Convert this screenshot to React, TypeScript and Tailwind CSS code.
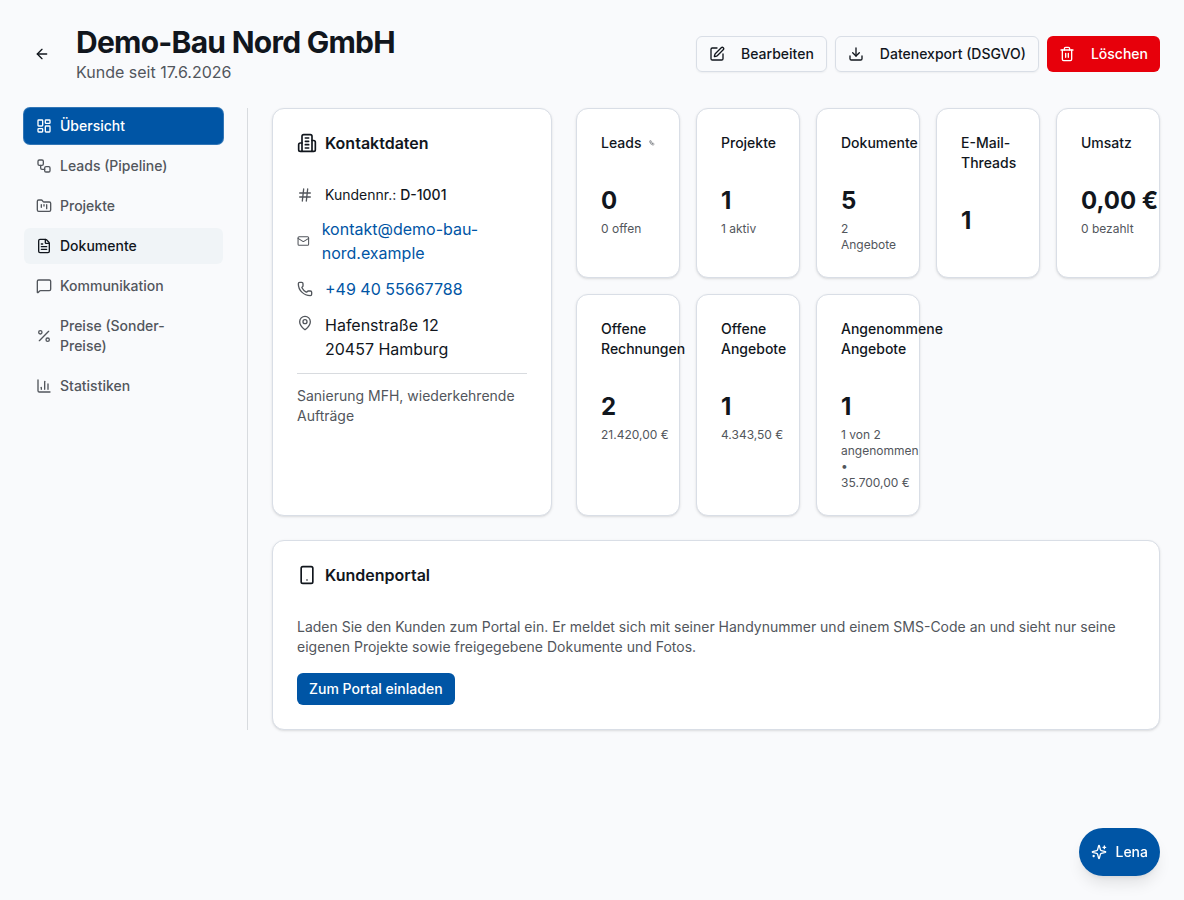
import {
    ArrowLeft,
    ChartColumn,
    Download,
    Euro,
    FileCheck,
    FileText,
    FolderKanban,
    Hash,
    LayoutDashboard,
    Mail,
    MapPin,
    MessageSquare,
    Percent,
    Phone,
    Receipt,
    Smartphone,
    SquarePen,
    Workflow,
    type LucideIcon,
} from "lucide-react";
import type { ReactNode } from "react";

type NavItem = { label: string; icon: LucideIcon; state?: "active" | "hover" };

const NAV_ITEMS: NavItem[] = [
    { label: "Übersicht", icon: LayoutDashboard, state: "active" },
    { label: "Leads (Pipeline)", icon: Workflow },
    { label: "Projekte", icon: FolderKanban },
    { label: "Dokumente", icon: FileText, state: "hover" },
    { label: "Kommunikation", icon: MessageSquare },
    { label: "Preise (Sonder-Preise)", icon: Percent },
    { label: "Statistiken", icon: ChartColumn },
];

type Stat = { title: string; value: string; hint?: string; icon: LucideIcon };

// Amounts keep a non-breaking space before the currency sign
const STATS: Stat[] = [
    { title: "Leads", value: "0", hint: "0 offen", icon: Workflow },
    { title: "Projekte", value: "1", hint: "1 aktiv", icon: FolderKanban },
    { title: "Dokumente", value: "5", hint: "2 Angebote", icon: FileText },
    { title: "E-Mail-Threads", value: "1", icon: Mail },
    { title: "Umsatz", value: "0,00\u00a0€", hint: "0 bezahlt", icon: Euro },
    {
        title: "Offene Rechnungen",
        value: "2",
        hint: "21.420,00\u00a0€",
        icon: Receipt,
    },
    {
        title: "Offene Angebote",
        value: "1",
        hint: "4.343,50\u00a0€",
        icon: FileText,
    },
    {
        title: "Angenommene Angebote",
        value: "1",
        hint: "1 von 2 angenommen • 35.700,00\u00a0€",
        icon: FileCheck,
    },
];

const svgProps = {
    viewBox: "0 0 24 24",
    fill: "none",
    stroke: "currentColor",
    strokeWidth: 2,
    strokeLinecap: "round",
    strokeLinejoin: "round",
} as const;

const BuildingIcon = () => (
    <svg {...svgProps} className="size-5">
        <path d="M6 22V4a2 2 0 0 1 2-2h8a2 2 0 0 1 2 2v18Z" />
        <path d="M6 12H4a2 2 0 0 0-2 2v6a2 2 0 0 0 2 2h2" />
        <path d="M18 9h2a2 2 0 0 1 2 2v9a2 2 0 0 1-2 2h-2" />
        <path d="M10 6h4M10 10h4M10 14h4M10 18h4" />
    </svg>
);

const TrashIcon = () => (
    <svg {...svgProps} className="size-4">
        <path d="M3 6h18" />
        <path d="M19 6v14c0 1-1 2-2 2H7c-1 0-2-1-2-2V6" />
        <path d="M8 6V4c0-1 1-2 2-2h4c1 0 2 1 2 2v2" />
        <path d="M10 11v6M14 11v6" />
    </svg>
);

const SparklesIcon = () => (
    <svg {...svgProps} className="size-4">
        <path d="M9.937 15.5A2 2 0 0 0 8.5 14.063l-6.135-1.582a.5.5 0 0 1 0-.962L8.5 9.936A2 2 0 0 0 9.937 8.5l1.582-6.135a.5.5 0 0 1 .963 0L14.063 8.5A2 2 0 0 0 15.5 9.937l6.135 1.581a.5.5 0 0 1 0 .964L15.5 14.063a2 2 0 0 0-1.437 1.437l-1.582 6.135a.5.5 0 0 1-.963 0z" />
        <path d="M20 3v4M22 5h-4M4 17v2M5 18H3" />
    </svg>
);

const Card = ({
    className = "",
    children,
}: {
    className?: string;
    children: ReactNode;
}) => (
    <div
        className={`rounded-xl border border-[#d9dee6] bg-white p-6 shadow-sm ${className}`}
    >
        {children}
    </div>
);

const CardTitle = ({ icon, text }: { icon: ReactNode; text: string }) => (
    <h2 className="mb-8 flex items-center gap-2 text-base leading-5 font-semibold">
        {icon}
        {text}
    </h2>
);

const StatCard = ({ title, value, hint, icon: Icon }: Stat) => (
    <Card>
        <div className="mb-8 flex items-center justify-between gap-2">
            <h3 className="text-sm font-medium">{title}</h3>
            <Icon className="h-4 w-4 text-[#52565c]" />
        </div>
        <div className="text-2xl font-bold">{value}</div>
        {hint && <p className="mt-1 text-xs text-[#52565c]">{hint}</p>}
    </Card>
);

const Sidebar = () => (
    <aside className="w-56 shrink-0 border-r border-[#d8dbdf] pr-6">
        <nav className="flex flex-col gap-1">
            {NAV_ITEMS.map(({ label, icon: Icon, state }) => {
                const tone =
                    state === "active"
                        ? "bg-[#0055a5] text-white ring-1 ring-[#0055a5]/80"
                        : state === "hover"
                          ? "bg-[#f0f4f7] text-[#11161d]"
                          : "text-[#52565c]";
                return (
                    <button
                        key={label}
                        type="button"
                        className={`flex w-full items-center gap-2 rounded-md px-3 py-2 text-left text-sm font-medium ${tone}`}
                    >
                        <Icon className="size-4 shrink-0" />
                        <span className="flex-1 pr-4">{label}</span>
                    </button>
                );
            })}
        </nav>
    </aside>
);

const outlineButton =
    "flex h-9 items-center gap-4 rounded-md border border-[#d9dee6] px-3 shadow-xs";

const App = () => (
    <div className="min-h-screen bg-[#f9fafc] p-6 font-[Inter,sans-serif] text-[#11161d]">
        <header className="mb-6 flex items-center justify-between">
            <div className="flex items-center gap-4">
                <button
                    type="button"
                    aria-label="Zurück"
                    className="flex size-9 items-center justify-center"
                >
                    <ArrowLeft className="size-4" />
                </button>
                <div>
                    <h1 className="text-3xl font-bold tracking-tight">
                        Demo-Bau Nord GmbH
                    </h1>
                    <p className="text-[#52565c]">Kunde seit 17.6.2026</p>
                </div>
            </div>
            <div className="flex gap-2 text-sm font-medium">
                <button type="button" className={outlineButton}>
                    <SquarePen className="size-4" />
                    Bearbeiten
                </button>
                <button type="button" className={outlineButton}>
                    <Download className="size-4" />
                    Datenexport (DSGVO)
                </button>
                <button
                    type="button"
                    className="flex h-9 items-center gap-4 rounded-md bg-[#e7000b] px-3 text-white"
                >
                    <TrashIcon />
                    Löschen
                </button>
            </div>
        </header>

        <div className="flex gap-6">
            <Sidebar />
            <main className="min-w-0 flex-1 space-y-6">
                <div className="grid grid-cols-3 gap-6">
                    <Card>
                        <CardTitle icon={<BuildingIcon />} text="Kontaktdaten" />
                        <div className="space-y-3">
                            <div className="flex items-center gap-3 text-sm">
                                <Hash className="h-4 w-4 text-[#52565c]" />
                                <span>
                                    Kundennr.:{" "}
                                    <span className="font-medium">D-1001</span>
                                </span>
                            </div>
                            <div className="flex items-center gap-3">
                                <Mail className="h-4 w-4 text-[#52565c]" />
                                <a className="text-[#0055a5]">
                                    kontakt@demo-bau-nord.example
                                </a>
                            </div>
                            <div className="flex items-center gap-3">
                                <Phone className="h-4 w-4 text-[#52565c]" />
                                <a className="text-[#0055a5]">
                                    +49 40 55667788
                                </a>
                            </div>
                            <div className="flex items-start gap-3">
                                <MapPin className="mt-0.5 h-4 w-4 text-[#52565c]" />
                                <div>
                                    <p>Hafenstraße 12</p>
                                    <p>20457 Hamburg</p>
                                </div>
                            </div>
                            <p className="border-t border-[#d8dbdf] pt-3 text-sm text-[#52565c]">
                                Sanierung MFH, wiederkehrende Aufträge
                            </p>
                        </div>
                    </Card>
                    <div className="col-span-2 grid grid-cols-5 gap-4">
                        {STATS.map((stat) => (
                            <StatCard key={stat.title} {...stat} />
                        ))}
                    </div>
                </div>

                <Card>
                    <CardTitle
                        icon={<Smartphone className="size-5" />}
                        text="Kundenportal"
                    />
                    <p className="text-sm text-[#52565c]">
                        Laden Sie den Kunden zum Portal ein. Er meldet sich mit
                        seiner Handynummer und einem SMS-Code an und sieht nur
                        seine eigenen Projekte sowie freigegebene Dokumente und
                        Fotos.
                    </p>
                    <button
                        type="button"
                        className="mt-4 flex h-8 items-center rounded-md bg-[#0055a5] px-3 text-sm font-medium text-white"
                    >
                        Zum Portal einladen
                    </button>
                </Card>
            </main>
        </div>

        {/* Floating assistant button */}
        <button
            type="button"
            className="fixed right-6 bottom-6 flex h-12 items-center gap-2 rounded-full bg-[#0055a5] px-3 text-sm font-medium text-white shadow-lg"
        >
            <SparklesIcon />
            Lena
        </button>
    </div>
);

export default App;
